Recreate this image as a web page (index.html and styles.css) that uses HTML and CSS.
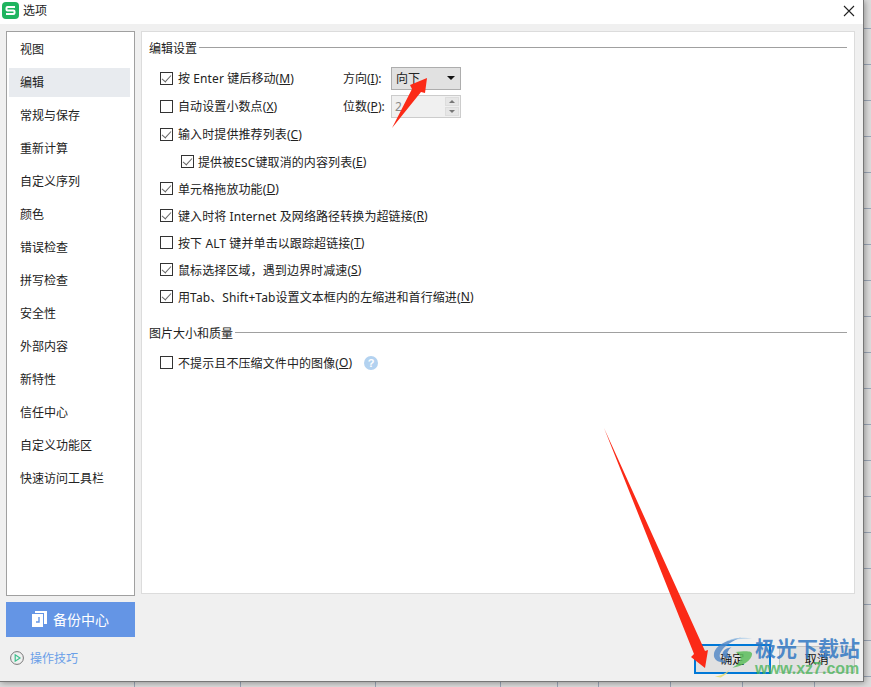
FILE: index.html
```html
<!DOCTYPE html>
<html lang="zh-CN">
<head>
    <meta charset="UTF-8">
    <title>选项</title>
    <link rel="stylesheet" href="styles.css">
</head>
<body>
    <div class="dialog">
        <header class="titlebar">
            <svg class="app-logo" width="17" height="17" viewBox="0 0 17 17">
                <rect width="17" height="17" rx="4" fill="#1fb45f"/>
                <path d="M13 5H5.5a1 1 0 0 0-1 1v1.5a1 1 0 0 0 1 1h6a1 1 0 0 1 1 1V11a1 1 0 0 1-1 1H4" fill="none" stroke="#fff" stroke-width="2"/>
            </svg>
            <span class="title">选项</span>
            <svg class="close" width="12" height="12" viewBox="0 0 12 12">
                <path d="M1 1l10 10M11 1L1 11" stroke="#222" stroke-width="1.1"/>
            </svg>
        </header>

        <div class="content">
            <div class="left-col">
                <nav class="sidebar">
                    <a class="nav-item">视图</a>
                    <a class="nav-item active">编辑</a>
                    <a class="nav-item">常规与保存</a>
                    <a class="nav-item">重新计算</a>
                    <a class="nav-item">自定义序列</a>
                    <a class="nav-item">颜色</a>
                    <a class="nav-item">错误检查</a>
                    <a class="nav-item">拼写检查</a>
                    <a class="nav-item">安全性</a>
                    <a class="nav-item">外部内容</a>
                    <a class="nav-item">新特性</a>
                    <a class="nav-item">信任中心</a>
                    <a class="nav-item">自定义功能区</a>
                    <a class="nav-item">快速访问工具栏</a>
                </nav>
                <button class="backup-btn">
                    <svg width="15" height="16" viewBox="0 0 15 16">
                        <path d="M0 3h11v13H0z" fill="#fff"/>
                        <path d="M3 0h12v13h-3V2H3z" fill="#fff"/>
                        <path d="M7 6v5H4" fill="none" stroke="#6495e5" stroke-width="1.4"/>
                    </svg>
                    备份中心
                </button>
                <a class="tips">
                    <svg width="14" height="14" viewBox="0 0 14 14">
                        <circle cx="7" cy="7" r="6.4" fill="none" stroke="#777" stroke-width="1"/>
                        <path d="M5.2 3.8v6.4L10 7z" fill="none" stroke="#3cc08c" stroke-width="1.2"/>
                    </svg>
                    操作技巧
                </a>
            </div>

            <div class="right-col">
                <main class="panel">
                    <div class="group-title">编辑设置</div>
                    <div class="options">
                        <div class="row row-tall">
                            <label class="option option-fixed"><input type="checkbox" checked>按 Enter 键后移动(<u>M</u>)</label>
                            <span class="field-label">方向(<u>I</u>):</span>
                            <div class="select">向下<i class="caret"></i></div>
                        </div>
                        <div class="row row-tall">
                            <label class="option option-fixed"><input type="checkbox">自动设置小数点(<u>X</u>)</label>
                            <span class="field-label">位数(<u>P</u>):</span>
                            <div class="spin">2
                                <div class="spin-btns">
                                    <span class="spin-btn"><i class="tri-up"></i></span>
                                    <span class="spin-btn"><i class="tri-down"></i></span>
                                </div>
                            </div>
                        </div>
                        <div class="row row-tall"><label class="option"><input type="checkbox" checked>输入时提供推荐列表(<u>C</u>)</label></div>
                        <div class="row sub"><label class="option"><input type="checkbox" checked>提供被ESC键取消的内容列表(<u>E</u>)</label></div>
                        <div class="row"><label class="option"><input type="checkbox" checked>单元格拖放功能(<u>D</u>)</label></div>
                        <div class="row"><label class="option"><input type="checkbox" checked>键入时将 Internet 及网络路径转换为超链接(<u>R</u>)</label></div>
                        <div class="row"><label class="option"><input type="checkbox">按下 ALT 键并单击以跟踪超链接(<u>T</u>)</label></div>
                        <div class="row"><label class="option"><input type="checkbox" checked>鼠标选择区域，遇到边界时减速(<u>S</u>)</label></div>
                        <div class="row"><label class="option"><input type="checkbox" checked>用Tab、Shift+Tab设置文本框内的左缩进和首行缩进(<u>N</u>)</label></div>
                    </div>

                    <div class="group-title group-second">图片大小和质量</div>
                    <div class="options options-second">
                        <div class="row">
                            <label class="option"><input type="checkbox">不提示且不压缩文件中的图像(<u>O</u>)</label>
                            <span class="help">?</span>
                        </div>
                    </div>
                </main>
                <footer class="buttons">
                    <button class="btn btn-primary">确定</button>
                    <button class="btn">取消</button>
                </footer>
            </div>
        </div>
    </div>

    <!-- red annotation arrows -->
    <svg class="arrows" width="871" height="687" viewBox="0 0 871 687">
        <path d="M392 128L412 89L410 85L427 78L425 93L421 92z" fill="#fb2a17"/>
        <path d="M604 428L694 654L691 657L705 668L708 650L705 651z" fill="#fb2a17"/>
    </svg>

    <!-- watermark -->
    <div class="watermark">
        <svg class="wm-logo" width="43" height="42" viewBox="0 0 44 42">
            <path d="M30 1C16 3 3 9 2 18c-1 7 7 10 14 8C9 25 6 21 9 16 12 10 21 4 30 1z" fill="#4f86c6" opacity=".8"/>
            <path d="M20 11c-6 1-10 4-9 8 1 3 5 4 9 3-3-1-5-3-4-6 1-2 2-4 4-5z" fill="#4f86c6" opacity=".9"/>
            <path d="M24 16c8-1 17-2 17 2 0 6-10 13-20 14 5-3 9-7 8-11-1-3-3-4-5-5z" fill="#5cbd5c" opacity=".85"/>
            <path d="M3 41c6-1 11-3 15-7-2 4-6 6-9 8z" fill="#e6dc78" opacity=".9"/>
            <path d="M14 5C20 2 30 0 41 2 30 2 21 3 14 5z" fill="#a8cbe8" opacity=".8"/>
        </svg>
        <div class="wm-text">
            <div class="wm-name">极光下载站</div>
            <div class="wm-url">www.xz7.com</div>
        </div>
    </div>
</body>
</html>
```

FILE: styles.css
```css
* {
    box-sizing: border-box;
}

body {
    margin: 0;
    width: 871px;
    height: 687px;
    overflow: hidden;
    position: relative;
    font-family: "Noto Sans", "Noto Sans CJK SC", sans-serif;
    font-size: 12px;
    color: #222;
    background-color: #dcdcdc;
    background-image:
        linear-gradient(#9aa5b5, #9aa5b5),
        linear-gradient(#9aa5b5, #9aa5b5),
        linear-gradient(#9aa5b5, #9aa5b5),
        linear-gradient(#9aa5b5, #9aa5b5),
        linear-gradient(#9aa5b5, #9aa5b5),
        linear-gradient(#9aa5b5, #9aa5b5),
        linear-gradient(#9aa5b5, #9aa5b5),
        linear-gradient(#9aa5b5, #9aa5b5),
        linear-gradient(#9aa5b5, #9aa5b5),
        repeating-linear-gradient(180deg, transparent 0, transparent 35px, #9aa5b5 35px, #9aa5b5 36px);
    background-size: 1px 100%, 1px 100%, 1px 100%, 1px 100%, 1px 100%, 1px 100%, 1px 100%, 1px 100%, 1px 100%, 100% 36px;
    background-position: 134px 0, 240px 0, 375px 0, 500px 0, 557px 0, 598px 0, 670px 0, 742px 0, 814px 0, 0 -7px;
    background-repeat: no-repeat, no-repeat, no-repeat, no-repeat, no-repeat, no-repeat, no-repeat, no-repeat, no-repeat, repeat-y;
}

.dialog {
    width: 864px;
    height: 682px;
    background-color: #f0f0f0;
    border-right: 1px solid #777;
    border-bottom: 1px solid #777;
    box-shadow: 1px 1px 6px rgba(0, 0, 0, 0.35);
}

.titlebar {
    height: 24px;
    background-color: #fff;
    display: flex;
    align-items: center;
    padding: 0 8px 3px 2px;
}

.title {
    margin-left: 4px;
    flex: 1;
    padding-bottom: 1px;
}

.content {
    display: flex;
    gap: 6px;
    padding: 7px 8px 0 6px;
}

/* left column */
.left-col {
    width: 129px;
}

.sidebar {
    height: 565px;
    background-color: #fff;
    border: 1px solid #a0a0a0;
    padding: 3px 4px 0 2px;
}

.nav-item {
    display: flex;
    align-items: center;
    height: 29px;
    margin-bottom: 4px;
    padding: 0 0 1px 11px;
}

.nav-item.active {
    background-color: #e8ebef;
}

.backup-btn {
    width: 129px;
    height: 35px;
    margin-top: 6px;
    border: none;
    background-color: #6495e5;
    color: #fff;
    font-family: inherit;
    font-size: 14px;
    display: flex;
    align-items: center;
    justify-content: center;
    gap: 6px;
    padding: 0 0 1px;
}

.tips {
    display: flex;
    align-items: center;
    gap: 6px;
    margin-top: 12px;
    padding-left: 4px;
    color: #6a9fe8;
}

/* right column */
.right-col {
    width: 714px;
}

.panel {
    height: 563px;
    background-color: #fff;
    border: 1px solid #dcdcdc;
    padding: 7px 7px 0 7px;
}

.group-title {
    display: flex;
    align-items: center;
    gap: 2px;
    height: 17px;
}

.group-title::after {
    content: '';
    flex: 1;
    height: 1px;
    background-color: #a0a0a0;
}

.group-second {
    margin-top: 14px;
}

.options {
    padding-left: 11px;
    margin-top: 8px;
}

.options-second {
    margin-top: 8px;
}

.row {
    display: flex;
    align-items: center;
    height: 27px;
}

.row-tall {
    height: 28px;
}

.row.sub {
    padding-left: 21px;
}

.row.sub input {
    margin-right: 4px;
}

.option {
    display: flex;
    align-items: center;
    white-space: nowrap;
    letter-spacing: 0.1px;
}

.option-fixed {
    width: 183px;
}

.option input {
    appearance: none;
    -webkit-appearance: none;
    width: 13px;
    height: 13px;
    margin: 0 5px 0 0;
    border: 1px solid #333;
    background-color: #fff;
    position: relative;
    flex: none;
}

.option input:checked::after {
    content: '';
    position: absolute;
    left: 3px;
    top: 0;
    width: 4px;
    height: 8px;
    border-right: 1.5px solid #666;
    border-bottom: 1.5px solid #666;
    transform: rotate(42deg);
}

.field-label {
    width: 48px;
    white-space: nowrap;
}

.select {
    width: 70px;
    height: 23px;
    background-color: #e1e1e1;
    border: 1px solid #adadad;
    display: flex;
    align-items: center;
    justify-content: space-between;
    padding: 0 4px 0 4px;
}

.caret {
    width: 0;
    height: 0;
    border-left: 4px solid transparent;
    border-right: 4px solid transparent;
    border-top: 4px solid #111;
    margin-right: 1px;
}

.spin {
    width: 70px;
    height: 23px;
    background-color: #f0f0f0;
    border: 1px solid #ccc;
    color: #888;
    display: flex;
    align-items: center;
    justify-content: space-between;
    padding-left: 3px;
    padding-right: 1px;
}

.spin-btns {
    display: flex;
    flex-direction: column;
    gap: 1px;
    width: 14px;
}

.spin-btn {
    height: 9px;
    background-color: #e6e6e6;
    border: 1px solid #ddd;
    display: flex;
    align-items: center;
    justify-content: center;
}

.tri-up {
    border-left: 3px solid transparent;
    border-right: 3px solid transparent;
    border-bottom: 3px solid #777;
}

.tri-down {
    border-left: 3px solid transparent;
    border-right: 3px solid transparent;
    border-top: 3px solid #777;
}

.help {
    width: 14px;
    height: 14px;
    border-radius: 50%;
    margin-left: 12px;
    background-color: #b3d2f0;
    color: #fff;
    font-family: "Liberation Sans", sans-serif;
    font-size: 11px;
    font-weight: 700;
    line-height: 14px;
    text-align: center;
}

.buttons {
    display: flex;
    gap: 8px;
    margin-top: 50px;
    padding-left: 553px;
    align-items: center;
    height: 30px;
}

.btn {
    width: 77px;
    height: 27px;
    background-color: #e1e1e1;
    border: 1px solid #c4c4c4;
    font-family: inherit;
    font-size: 12px;
    color: #111;
    padding: 0;
}

.btn-primary {
    height: 30px;
    border: 2px solid #0078d7;
}

/* overlays */
.arrows {
    position: absolute;
    left: 0;
    top: 0;
}

.watermark {
    position: absolute;
    left: 712px;
    top: 636px;
    display: flex;
}

.wm-name {
    color: rgba(50, 120, 195, 0.85);
    font-size: 21px;
    font-weight: 700;
    line-height: 25px;
    white-space: nowrap;
}

.wm-url {
    color: rgba(75, 180, 90, 0.8);
    font-family: "Liberation Sans", sans-serif;
    font-size: 16px;
    font-weight: 700;
    line-height: 16px;
    white-space: nowrap;
}
```
